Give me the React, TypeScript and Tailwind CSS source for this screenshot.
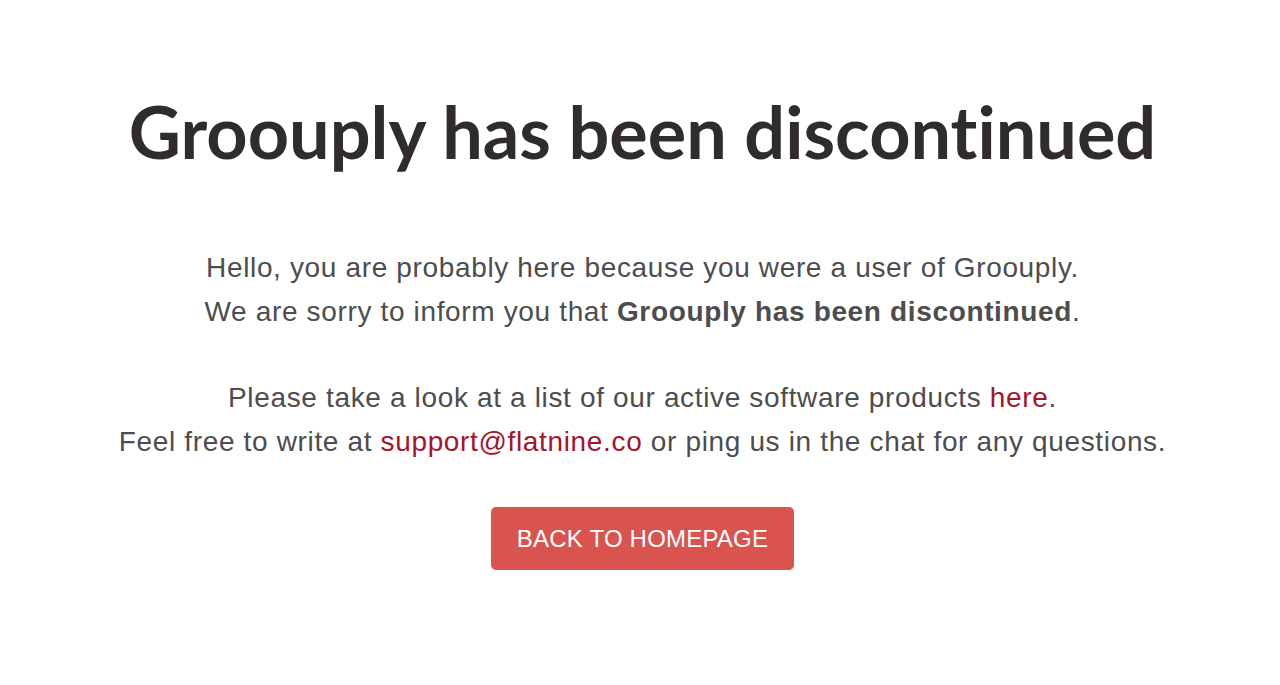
export default function App() {
  return (
    <div className="min-h-[685px] bg-white pl-[5px] flex flex-col items-center text-center font-['Liberation_Sans',Arial,sans-serif]">
      <h1 className="mt-[86px] text-[72px] leading-[90px] font-bold text-[#302c2d] font-['Lato',sans-serif] [font-variant-ligatures:none]">
        Groouply has been discontinued
      </h1>

      <div className="mt-[70px] text-[28px] leading-[44px] tracking-[0.65px] text-[#4d4d4d]">
        <p>Hello, you are probably here because you were a user of Groouply.</p>
        <p>
          We are sorry to inform you that <strong className="font-bold">Groouply has been discontinued</strong>.
        </p>
      </div>

      <div className="mt-[42px] text-[28px] leading-[44px] tracking-[0.65px] text-[#4d4d4d]">
        <p>
          Please take a look at a list of our active software products{" "}
          <a href="#" className="text-[#a3152a]">here</a>.
        </p>
        <p>
          Feel free to write at <a href="#" className="text-[#a3152a]">support@flatnine.co</a> or ping us in the chat for any questions.
        </p>
      </div>

      <a
        href="#"
        className="mt-[43px] w-[303px] h-[63px] flex items-center justify-center rounded-[5px] bg-[#d9534f] text-white text-[24px] tracking-[0.2px] uppercase"
      >
        Back to homepage
      </a>
    </div>
  )
}
